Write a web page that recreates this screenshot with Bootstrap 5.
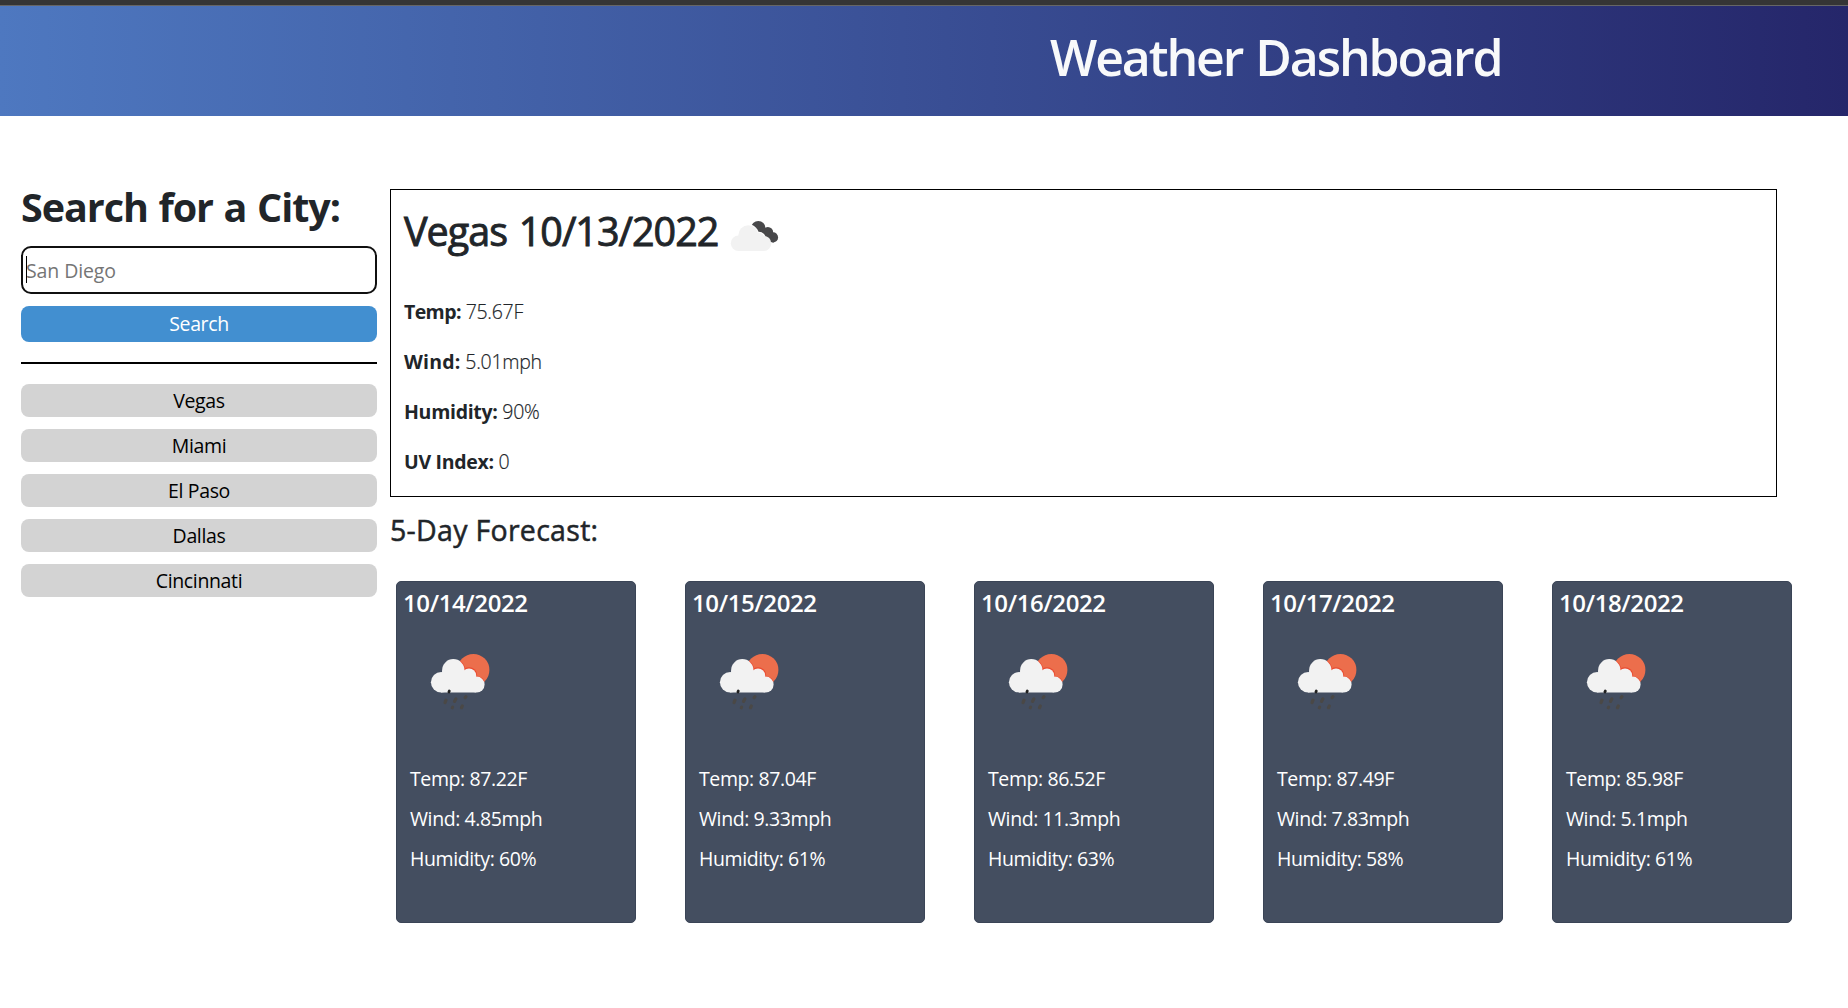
<!DOCTYPE html>
<html lang="en">
<head>
<meta charset="utf-8">
<meta name="viewport" content="width=device-width, initial-scale=1">
<title>Weather Dashboard</title>
<link href="https://cdn.jsdelivr.net/npm/bootstrap@5.3.0/dist/css/bootstrap.min.css" rel="stylesheet">
<style>
body{font-family:"Open Sans","Noto Sans",sans-serif;font-size:19.5px;line-height:30px;letter-spacing:-.28px;color:#212529;background:#fff;overflow:hidden}
.topbar{height:6px;background:#353535;border-bottom:1px solid #666}
.hero{height:110px;padding:21px 0 0 1050px;background:linear-gradient(to right,#4e78c0,#25266a)}
.hero h1{font-size:50px;line-height:60px;font-weight:600;letter-spacing:-2.1px;word-spacing:2px;color:#f8f9fa}
.page{padding-left:21px}
.side{width:356px;padding-top:67px}
.side h2{font-size:39.5px;line-height:48px;font-weight:700;letter-spacing:-1.05px;word-spacing:1.4px;margin-bottom:15px}
.city-input{display:block;width:100%;height:48px;border:2px solid #101010;border-radius:10px;padding:1px 3px 0;outline:0;letter-spacing:-.1px;background:#fff;caret-color:transparent}
.city-input::placeholder{color:#757575;opacity:1}
.caret{position:absolute;left:5px;top:10px;width:1px;height:27px;background:#000}
.side .btn{font-size:inherit;line-height:30px;letter-spacing:-.36px;border:0;border-radius:8px;padding:0}
.go{height:36px;background:#428fd0!important;color:#fff;margin-top:12px}
.rule{height:2px;background:#000;margin:20px 0}
.cities{gap:12px}
.city{height:33px;background:#d3d3d3!important;color:#000}
.main-col{width:1387px;margin-left:13px;padding-top:73px}
.today{height:308px;border:1px solid #000;padding:17px 13px}
.today-head{margin-bottom:42px}
.today h2{font-size:39.5px;line-height:48px;font-weight:400;-webkit-text-stroke:.9px #212529;letter-spacing:-1px;word-spacing:2.5px;margin:0}
.today-head svg{margin:10px 0 0 12px}
.today p{margin:0 0 20px;font-weight:300;-webkit-text-stroke:.2px #212529}
.today b{font-weight:700;letter-spacing:-.3px;-webkit-text-stroke:0}
.today b.tight{letter-spacing:-.6px}
.today b.loose{letter-spacing:.2px}
.five{font-size:28.5px;line-height:34px;font-weight:400;-webkit-text-stroke:.5px #212529;letter-spacing:.3px;margin:16px 0 34px}
.days{gap:49px;padding-left:6px;width:1403px}
.day{width:240px;height:342px;background:#444e60;border:1px solid #3a4456;border-radius:5px;color:#fff;letter-spacing:-.4px}
.day h3{font-size:24px;line-height:30px;font-weight:600;letter-spacing:-.38px;margin:6px 0 22px 6px}
.day svg{display:block;margin:0 0 44px 23px}
.day p{margin:0 0 10px 13px}
</style>
</head>
<body>
<svg width="0" height="0" class="position-absolute" aria-hidden="true"><defs>
<clipPath id="sun"><circle cx="53.4" cy="29.9" r="16"/></clipPath>
<g id="rain">
<circle cx="53.4" cy="29.9" r="16" fill="#ec6e4c"/>
<g fill="#ea4b30" clip-path="url(#sun)"><circle cx="33.3" cy="30.3" r="11.9"/><circle cx="49" cy="35.4" r="8.2"/><circle cx="56.6" cy="44.6" r="8.6"/></g>
<g fill="#f2f2f2"><circle cx="33.3" cy="30.3" r="11.2"/><circle cx="49" cy="35.6" r="7.2"/><circle cx="56.6" cy="44.6" r="8"/><circle cx="21.2" cy="42.3" r="10.3"/><path d="M22.2 31h26.8l7 10v11.6H21z"/></g>
<g stroke="#4a4846" stroke-width="3.2" stroke-linecap="round"><path d="M29.3 51l-.4 1" stroke="#222" stroke-width="2.8"/><path d="M26 60.2l-1 2.4M35.9 58.8l-1.4 2.6M45.9 56.8l-.8 1M32.6 67.2l-.3.5M42.3 66l-.8 1.7"/></g>
</g></defs></svg>
<div class="topbar"></div>
<header class="hero"><h1 class="m-0">Weather Dashboard</h1></header>
<div class="page d-flex align-items-start">
<aside class="side flex-shrink-0">
<h2>Search for a City:</h2>
<div class="position-relative"><input class="city-input" type="text" placeholder="San Diego"><span class="caret"></span></div>
<button class="btn go w-100 d-block">Search</button>
<div class="rule"></div>
<div class="cities d-grid">
<button class="btn city">Vegas</button><button class="btn city">Miami</button><button class="btn city">El Paso</button><button class="btn city">Dallas</button><button class="btn city">Cincinnati</button>
</div>
</aside>
<main class="main-col flex-shrink-0">
<section class="today">
<div class="today-head d-flex align-items-center">
<h2>Vegas 10/13/2022</h2>
<svg width="49" height="32" viewBox="730 221 49 32">
<g fill="#48484a"><circle cx="758.3" cy="229.2" r="7.2"/><circle cx="767.8" cy="233.4" r="5.4"/><circle cx="773" cy="238.4" r="5.1"/><path d="M758 229l10 0 6 14.4-6-1z"/></g>
<g fill="#fff"><circle cx="748" cy="236.2" r="11"/><circle cx="758.8" cy="240.2" r="7.4"/></g>
<g fill="#f2f2f2"><circle cx="748.3" cy="236.2" r="10"/><circle cx="758.3" cy="240" r="6.4"/><circle cx="738.5" cy="244.2" r="7.7"/><circle cx="763.8" cy="244.4" r="7.5"/><path d="M740 238h18l6 4v9.9h-25.5z"/></g>
</svg>
</div>
<p><b class="tight">Temp:</b> 75.67F</p>
<p><b class="loose">Wind:</b> 5.01mph</p>
<p><b>Humidity:</b> 90%</p>
<p><b>UV Index:</b> 0</p>
</section>
<h3 class="five">5-Day Forecast:</h3>
<section class="days d-flex">
<article class="day"><h3>10/14/2022</h3><svg width="80" height="80"><use href="#rain"/></svg><p>Temp: 87.22F</p><p>Wind: 4.85mph</p><p>Humidity: 60%</p></article>
<article class="day"><h3>10/15/2022</h3><svg width="80" height="80"><use href="#rain"/></svg><p>Temp: 87.04F</p><p>Wind: 9.33mph</p><p>Humidity: 61%</p></article>
<article class="day"><h3>10/16/2022</h3><svg width="80" height="80"><use href="#rain"/></svg><p>Temp: 86.52F</p><p>Wind: 11.3mph</p><p>Humidity: 63%</p></article>
<article class="day"><h3>10/17/2022</h3><svg width="80" height="80"><use href="#rain"/></svg><p>Temp: 87.49F</p><p>Wind: 7.83mph</p><p>Humidity: 58%</p></article>
<article class="day"><h3>10/18/2022</h3><svg width="80" height="80"><use href="#rain"/></svg><p>Temp: 85.98F</p><p>Wind: 5.1mph</p><p>Humidity: 61%</p></article>
</section>
</main>
</div>
<script src="https://cdn.jsdelivr.net/npm/bootstrap@5.3.0/dist/js/bootstrap.bundle.min.js"></script>
</body>
</html>
